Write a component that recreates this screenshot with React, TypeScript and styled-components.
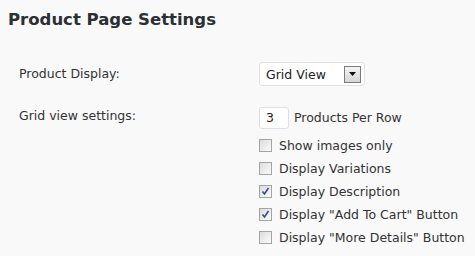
import React from "react";
import styled, { createGlobalStyle } from "styled-components";

const Global = createGlobalStyle`
  html, body { margin: 0; padding: 0; background: #f9f9f9; }
  body { font-family: "DejaVu Sans", Verdana, sans-serif; color: #333; }
`;

const Page = styled.div`
  width: 475px;
  height: 256px;
  box-sizing: border-box;
  padding: 10px 0 0 8px;
  background: #f9f9f9;
`;

const Title = styled.h2`
  margin: 0;
  font-size: 16.5px;
  font-weight: bold;
  color: #2c2f33;
  line-height: 20px;
`;

const Table = styled.div`
  display: grid;
  grid-template-columns: 240px 1fr;
  margin: 32px 0 0 11px;
  row-gap: 20px;
  font-size: 12.5px;
  color: #333;
`;

const Label = styled.div<{ $top: number }>`
  padding-top: ${(p) => p.$top}px;
  line-height: 16px;
`;

const Cell = styled.div`
  display: flex;
  flex-direction: column;
`;

const SelectBox = styled.div`
  width: 106px;
  height: 24px;
  box-sizing: border-box;
  border: 1px solid #e2e2e2;
  border-radius: 3px;
  background: #fff;
  display: flex;
  align-items: center;
  justify-content: space-between;
  padding: 0 3px 0 6px;
  font-size: 12.5px;
  color: #222;
`;

const Arrow = styled.div`
  width: 17px;
  height: 17px;
  box-sizing: border-box;
  border: 1px solid #7a7a7a;
  background: linear-gradient(#f4f4f4, #d6d6d6);
  display: flex;
  align-items: center;
  justify-content: center;
`;

const InlineRow = styled.div`
  display: flex;
  align-items: center;
  gap: 5px;
  height: 23px;
  margin-bottom: 5px;
`;

const NumInput = styled.div`
  width: 30px;
  height: 22px;
  box-sizing: border-box;
  border: 1px solid #dfdfdf;
  border-radius: 3px;
  background: #fff;
  padding-left: 6px;
  line-height: 20px;
  font-size: 12.5px;
  color: #222;
`;

const CheckRow = styled.div`
  display: flex;
  align-items: center;
  gap: 7px;
  height: 23px;
`;

const Box = styled.span`
  width: 13px;
  height: 13px;
  box-sizing: border-box;
  border: 1px solid #a4a4a4;
  background: linear-gradient(135deg, #dcdcdc, #fbfbfb);
  display: flex;
  align-items: center;
  justify-content: center;
`;

const items: [string, boolean][] = [
  ["Show images only", false],
  ["Display Variations", false],
  ["Display Description", true],
  ['Display "Add To Cart" Button', true],
  ['Display "More Details" Button', false],
];

export default function App() {
  return (
    <Page>
      <Global />
      <Title>Product Page Settings</Title>
      <Table>
        <Label $top={4}>Product Display:</Label>
        <Cell>
          <SelectBox>
            <span>Grid View</span>
            <Arrow>
              <svg width="7" height="4" viewBox="0 0 7 4">
                <path d="M0 0h7L3.5 4z" fill="#111" />
              </svg>
            </Arrow>
          </SelectBox>
        </Cell>
        <Label $top={2}>Grid view settings:</Label>
        <Cell>
          <InlineRow>
            <NumInput>3</NumInput>
            <span>Products Per Row</span>
          </InlineRow>
          {items.map(([t, c]) => (
            <CheckRow key={t}>
              <Box>
                {c && (
                  <svg width="9" height="9" viewBox="0 0 9 9">
                    <path d="M1.5 4.5l2 2.5L7.5 1" fill="none" stroke="#3a4a8a" strokeWidth="1.6" />
                  </svg>
                )}
              </Box>
              <span>{t}</span>
            </CheckRow>
          ))}
        </Cell>
      </Table>
    </Page>
  );
}
